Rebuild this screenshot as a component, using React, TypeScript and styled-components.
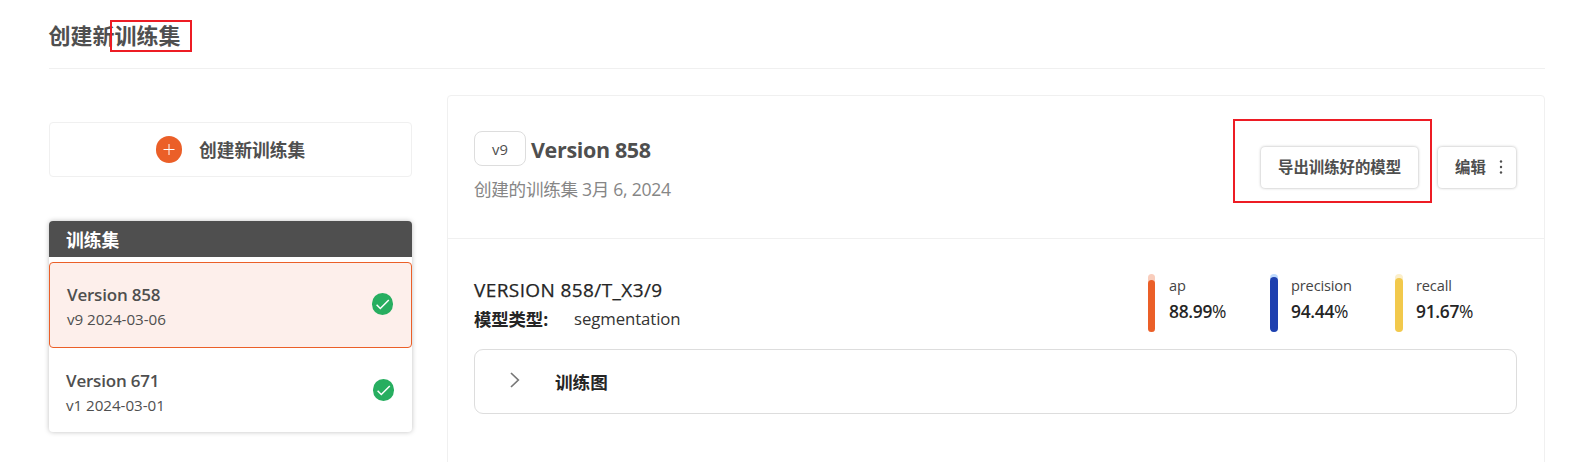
import React from "react";
import styled, { createGlobalStyle } from "styled-components";

const GlobalStyle = createGlobalStyle`
  * { box-sizing: border-box; }
  body {
    margin: 0;
    background: #fff;
    color: #4f4f4f;
    font-family: "Open Sans", "Noto Sans CJK SC", sans-serif;
    overflow: hidden;
  }
`;

const Page = styled.main`
  width: 1571px;
  height: 462px;
  padding: 0 26px 0 49px;
  overflow: hidden;
`;

const TitleBar = styled.header`
  height: 69px;
  padding-top: 20px;
  border-bottom: 1px solid #f0f0f0;
`;

const Title = styled.h1`
  position: relative;
  width: max-content;
  margin: 0;
  font-size: 22px;
  line-height: 31px;
  font-weight: 700;
  text-indent: -0.4px;
`;

const Marker = styled.span<{ $top: number; $left: number; $width: number; $height: number }>`
  position: absolute;
  top: ${(p) => p.$top}px;
  left: ${(p) => p.$left}px;
  width: ${(p) => p.$width}px;
  height: ${(p) => p.$height}px;
  border: 2px solid #ed1c24;
  pointer-events: none;
`;

const Columns = styled.div`
  display: grid;
  grid-template-columns: 363px 1098px;
  column-gap: 35px;
`;

const Sidebar = styled.aside`
  padding-top: 53px;
`;

const CreateButton = styled.button`
  display: flex;
  align-items: center;
  width: 363px;
  height: 55px;
  padding: 0 0 0 106px;
  border: 1px solid #f0f0f0;
  border-radius: 4px;
  background: #fff;
  color: #4f4f4f;
  font: 700 17.7px/28px "Open Sans", "Noto Sans CJK SC", sans-serif;
  gap: 17px;
`;

const VersionList = styled.section`
  height: 211px;
  margin-top: 44px;
  border-radius: 4px;
  box-shadow: 0 0 5px rgba(0, 0, 0, 0.25);
`;

const ListHeader = styled.div`
  height: 36px;
  margin-bottom: 5px;
  padding-left: 17px;
  border-radius: 4px 4px 0 0;
  background: #4f4f4f;
  color: #fff;
  font-size: 17.8px;
  line-height: 38px;
  font-weight: 700;
`;

const VersionItem = styled.div<{ $active?: boolean }>`
  display: flex;
  align-items: center;
  justify-content: space-between;
  height: ${(p) => (p.$active ? 86 : 84)}px;
  padding: ${(p) => (p.$active ? "0 18px 2px 17px" : "0 18px 0 17px")};
  border: ${(p) => (p.$active ? "1px solid #eb5f28" : "0")};
  border-radius: 4px;
  background: ${(p) => (p.$active ? "#fdefeb" : "transparent")};
`;

const ItemText = styled.div<{ $active?: boolean }>`
  padding-top: ${(p) => (p.$active ? 7 : 6)}px;
`;

const ItemName = styled.div`
  font-size: 17px;
  line-height: 24px;
  font-weight: 600;
  letter-spacing: -0.2px;
`;

const ItemMeta = styled.div<{ $active?: boolean }>`
  font-size: 15.2px;
  line-height: ${(p) => (p.$active ? 25 : 24)}px;
  letter-spacing: -0.05px;
`;

const Panel = styled.section`
  height: 400px;
  margin-top: 26px;
  border: 1px solid #f0f0f0;
  border-radius: 4px;
`;

const PanelHeader = styled.div`
  display: flex;
  justify-content: space-between;
  height: 143px;
  padding: 35px 27px 0 26px;
  border-bottom: 1px solid #f0f0f0;
`;

const NameRow = styled.div`
  display: flex;
  align-items: center;
  gap: 5px;
`;

const Badge = styled.span`
  width: 52px;
  height: 35px;
  border: 1px solid #ddd;
  border-radius: 8px;
  font-size: 14.8px;
  line-height: 35px;
  text-align: center;
`;

const VersionName = styled.h2`
  margin: 0;
  padding-top: 2px;
  font-size: 21.5px;
  line-height: 33px;
  font-weight: 700;
  letter-spacing: -0.35px;
`;

const Created = styled.div`
  margin-top: 10px;
  color: #868686;
  font-size: 17.6px;
  line-height: 26px;
  font-weight: 400;
  letter-spacing: -0.3px;
`;

const Actions = styled.div`
  display: flex;
  gap: 20px;
  padding: 16px 1px 0 0;
`;

const ActionButton = styled.button<{ $width: number }>`
  position: relative;
  display: flex;
  align-items: center;
  gap: 12px;
  width: ${(p) => p.$width}px;
  height: 41px;
  padding: 0 0 0 17px;
  border: 0;
  border-radius: 4px;
  background: #fff;
  box-shadow: 0 0 3px rgba(0, 0, 0, 0.32);
  color: #4f4f4f;
  font: 700 15.4px/24px "Open Sans", "Noto Sans CJK SC", sans-serif;
  white-space: nowrap;
`;

const PanelBody = styled.div`
  padding: 35px 27px 0 26px;
  color: #252525;
`;

const Summary = styled.div`
  display: flex;
  justify-content: space-between;
`;

const ModelId = styled.h3`
  margin: 2px 0 0;
  font-size: 19px;
  line-height: 28px;
  font-weight: 500;
  letter-spacing: 0.4px;
  -webkit-text-stroke: 0.25px currentColor;
`;

const ModelType = styled.div`
  display: flex;
  gap: 26px;
  font-size: 16.8px;
  line-height: 30px;
  color: #333;
  letter-spacing: -0.1px;

  strong {
    color: #252525;
    font-size: 17.4px;
    font-weight: 700;
    letter-spacing: -0.1px;
  }
`;

const Metrics = styled.div`
  display: grid;
  grid-template-columns: 122px 125px 122px;
`;

const Metric = styled.div`
  display: flex;
`;

const Track = styled.div<{ $color: string; $width: number }>`
  display: flex;
  align-items: flex-end;
  width: ${(p) => p.$width}px;
  height: 58px;
  margin-right: ${(p) => 21 - p.$width}px;
  border-radius: 4px;
  background: ${(p) => p.$color};
`;

const Fill = styled.div<{ $color: string; $height: number }>`
  width: 100%;
  height: ${(p) => p.$height}px;
  border-radius: 4px;
  background: ${(p) => p.$color};
`;

const MetricLabel = styled.div`
  color: #444;
  font-size: 14.6px;
  line-height: 23px;
  letter-spacing: -0.15px;
`;

const MetricValue = styled.div`
  font-size: 17.4px;
  line-height: 29px;
  letter-spacing: -0.3px;

  b { font-weight: 600; }
`;

const Accordion = styled.div`
  display: flex;
  align-items: center;
  height: 65px;
  margin-top: 15px;
  padding-left: 35px;
  border: 1px solid #ddd;
  border-radius: 9px;
  font-size: 17.6px;
  line-height: 28px;
  font-weight: 700;

  svg { margin: 0 35px 4px 0; }
`;

const CheckIcon = () => (
  <svg width="21" height="22" viewBox="0 0 21 22">
    <rect width="21" height="22" rx="10.5" fill="#27ae60" />
    <path d="M4.6 11.8 8.3 15.5 16.8 7" fill="none" stroke="#fff" strokeWidth="1.5" />
  </svg>
);

const metrics = [
  { label: "ap", value: "88.99", width: 7, fill: 52, color: "#eb5f28", track: "#f9cdbc" },
  { label: "precision", value: "94.44", width: 8, fill: 55, color: "#1e40af", track: "#bfdbfe" },
  { label: "recall", value: "91.67", width: 8, fill: 54, color: "#f2c94c", track: "#fbefcb" },
];

const versions = [
  { name: "Version 858", meta: "v9 2024-03-06", active: true },
  { name: "Version 671", meta: "v1 2024-03-01", active: false },
];

export default function App() {
  return (
    <Page>
      <GlobalStyle />
      <TitleBar>
        <Title>
          创建新训练集
          <Marker $top={0} $left={61} $width={82} $height={32} />
        </Title>
      </TitleBar>
      <Columns>
        <Sidebar>
          <CreateButton>
            <svg width="26" height="27" viewBox="0 0 26 27">
              <rect width="26" height="27" rx="13" fill="#eb5f28" />
              <path d="M7.5 13.5h11M13 8v11" stroke="#fff" strokeWidth="1" />
            </svg>
            <span>创建新训练集</span>
          </CreateButton>
          <VersionList>
            <ListHeader>训练集</ListHeader>
            {versions.map((v) => (
              <VersionItem key={v.name} $active={v.active}>
                <ItemText $active={v.active}>
                  <ItemName>{v.name}</ItemName>
                  <ItemMeta $active={v.active}>{v.meta}</ItemMeta>
                </ItemText>
                <CheckIcon />
              </VersionItem>
            ))}
          </VersionList>
        </Sidebar>
        <Panel>
          <PanelHeader>
            <div>
              <NameRow>
                <Badge>v9</Badge>
                <VersionName>Version 858</VersionName>
              </NameRow>
              <Created>创建的训练集 3月 6, 2024</Created>
            </div>
            <Actions>
              <ActionButton $width={157}>
                导出训练好的模型
                <Marker $top={-28} $left={-28} $width={199} $height={84} />
              </ActionButton>
              <ActionButton $width={78}>
                编辑
                <svg width="6" height="16" viewBox="0 0 6 16" fill="#4f4f4f">
                  <circle cx="3" cy="1.5" r="1.2" />
                  <circle cx="3" cy="7" r="1.2" />
                  <circle cx="3" cy="12.5" r="1.2" />
                </svg>
              </ActionButton>
            </Actions>
          </PanelHeader>
          <PanelBody>
            <Summary>
              <div>
                <ModelId>VERSION 858/T_X3/9</ModelId>
                <ModelType>
                  <strong>模型类型:</strong>
                  <span>segmentation</span>
                </ModelType>
              </div>
              <Metrics>
                {metrics.map((m) => (
                  <Metric key={m.label}>
                    <Track $color={m.track} $width={m.width}>
                      <Fill $color={m.color} $height={m.fill} />
                    </Track>
                    <div>
                      <MetricLabel>{m.label}</MetricLabel>
                      <MetricValue>
                        <b>{m.value}</b>%
                      </MetricValue>
                    </div>
                  </Metric>
                ))}
              </Metrics>
            </Summary>
            <Accordion>
              <svg width="10" height="16" viewBox="0 0 10 16">
                <path d="M1 1 8.3 8 1 15" fill="none" stroke="#777" strokeWidth="1.7" />
              </svg>
              <span>训练图</span>
            </Accordion>
          </PanelBody>
        </Panel>
      </Columns>
    </Page>
  );
}
